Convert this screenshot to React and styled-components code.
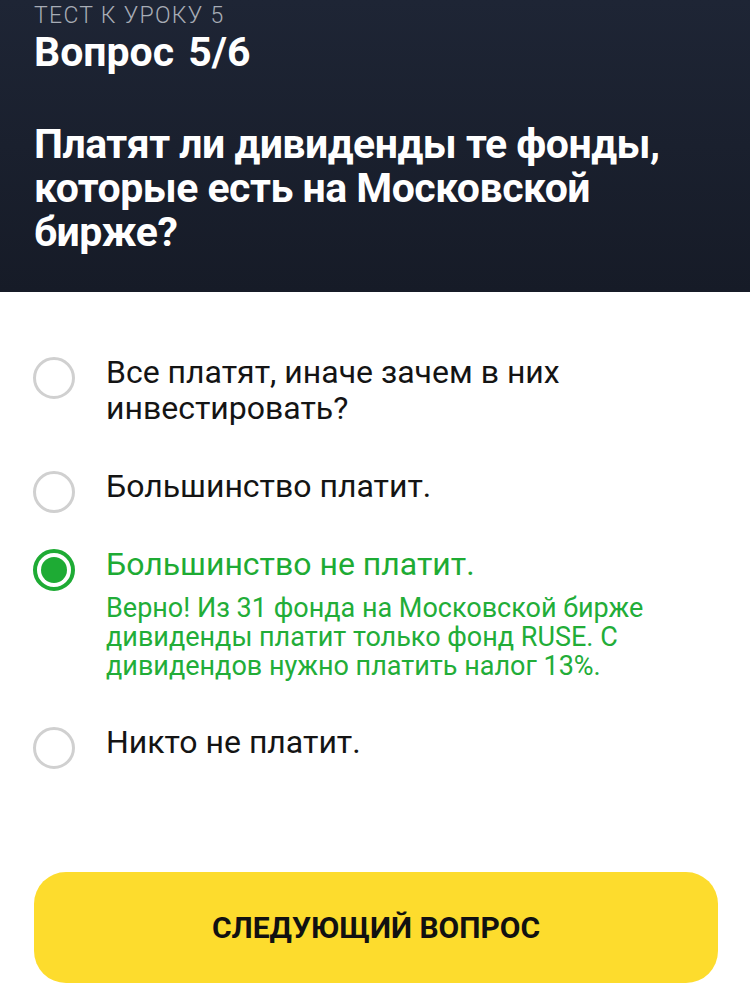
import React from "react";
import styled, { createGlobalStyle } from "styled-components";

const GlobalStyle = createGlobalStyle`
  html, body {
    margin: 0;
    padding: 0;
    background: #ffffff;
    font-family: Roboto, "Liberation Sans", sans-serif;
  }
`;

const Page = styled.div`
  width: 750px;
  height: 995px;
  display: flex;
  flex-direction: column;
  background: #fff;
  overflow: hidden;
`;

const Header = styled.div`
  height: 292px;
  box-sizing: border-box;
  padding: 3px 34px 0;
  background: linear-gradient(180deg, #1e2535 0%, #161b27 100%);
  color: #fff;
`;

const Caption = styled.div`
  font-size: 23px;
  font-weight: 300;
  line-height: 26px;
  letter-spacing: 1.3px;
  color: #a7acb5;
  text-transform: uppercase;
`;

const Counter = styled.div`
  font-size: 41px;
  font-weight: 700;
  line-height: 46px;
  word-spacing: 4px;
`;

const Question = styled.div`
  margin-top: 47px;
  font-size: 41px;
  font-weight: 700;
  line-height: 44px;
  letter-spacing: -0.5px;
`;

const Options = styled.div`
  display: flex;
  flex-direction: column;
  gap: 42px;
  padding: 62px 34px 0 34px;
`;

const Option = styled.div`
  display: flex;
  align-items: flex-start;
  gap: 31px;
`;

/* the circle hangs a little below the first text line, so it does not add height */
const Radio = styled.div`
  flex: none;
  width: 42px;
  height: 42px;
  margin: 3px 0 -9px -1px;
  box-sizing: border-box;
  border-radius: 50%;
  border: ${(p) => (p.$checked ? "4px solid #1eab34" : "3px solid #d0d0d0")};
  display: flex;
  align-items: center;
  justify-content: center;

  &::after {
    content: "";
    display: ${(p) => (p.$checked ? "block" : "none")};
    width: 26px;
    height: 26px;
    border-radius: 50%;
    background: #1eab34;
  }
`;

const Body = styled.div`
  display: flex;
  flex-direction: column;
  min-width: 0;
`;

const Label = styled.div`
  font-size: 32px;
  line-height: 36px;
  color: ${(p) => (p.$checked ? "#1eab34" : "#141414")};
`;

const Explain = styled.div`
  margin-top: 12px;
  padding-bottom: 1px;
  font-size: 27px;
  line-height: 29px;
  color: #22ad38;
`;

const Footer = styled.div`
  margin-top: auto;
  padding: 0 32px 12px 34px;
`;

const NextButton = styled.button`
  width: 100%;
  height: 111px;
  border: none;
  border-radius: 32px;
  background: #fddc2d;
  color: #111;
  font-family: Roboto, "Liberation Sans", sans-serif;
  font-size: 30px;
  font-weight: 700;
  text-transform: uppercase;
`;

const answers = [
  { text: "Все платят, иначе зачем в них инвестировать?" },
  { text: "Большинство платит." },
  {
    text: "Большинство не платит.",
    checked: true,
    note: "Верно! Из 31 фонда на Московской бирже дивиденды платит только фонд RUSE. С дивидендов нужно платить налог 13%.",
  },
  { text: "Никто не платит." },
];

export default function App() {
  return (
    <Page>
      <GlobalStyle />
      <Header>
        <Caption>Тест к уроку 5</Caption>
        <Counter>Вопрос 5/6</Counter>
        <Question>
          Платят ли дивиденды те фонды,
          <br />
          которые есть на Московской
          <br />
          бирже?
        </Question>
      </Header>
      <Options>
        {answers.map((a) => (
          <Option key={a.text}>
            <Radio $checked={a.checked} />
            <Body>
              <Label $checked={a.checked}>{a.text}</Label>
              {a.note && <Explain>{a.note}</Explain>}
            </Body>
          </Option>
        ))}
      </Options>
      <Footer>
        <NextButton>Следующий вопрос</NextButton>
      </Footer>
    </Page>
  );
}
